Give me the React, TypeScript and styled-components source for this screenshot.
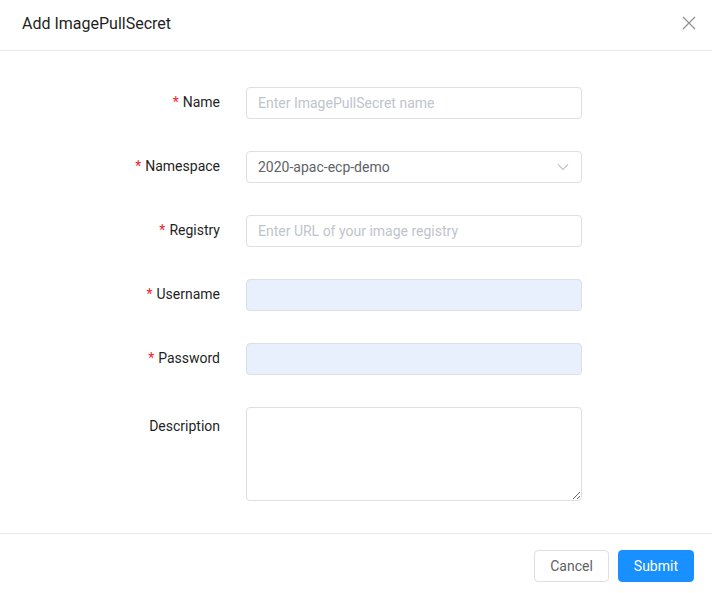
import styled, { createGlobalStyle } from "styled-components"

const Global = createGlobalStyle`
  html, body {
    margin: 0;
    padding: 0;
    background: #fff;
    font-family: Roboto, "Liberation Sans", sans-serif;
  }
  * { box-sizing: border-box; }
`

const Dialog = styled.div`
  width: 712px;
  height: 593px;
  display: flex;
  flex-direction: column;
  background: #fff;
`

const Header = styled.div`
  height: 51px;
  display: flex;
  align-items: center;
  justify-content: space-between;
  padding: 0 15px 4px 22px;
  border-bottom: 1px solid #e8e8e8;
`

const Title = styled.h2`
  margin: 0;
  font-size: 16px;
  font-weight: 400;
  color: #1f1f1f;
`

const CloseButton = styled.button`
  border: 0;
  background: none;
  padding: 0;
  width: 16px;
  height: 16px;
  display: flex;
  cursor: pointer;
`

const Body = styled.form`
  flex: 1;
  padding-top: 36px;
  display: flex;
  flex-direction: column;
  gap: 32px;
`

const Row = styled.div`
  display: grid;
  grid-template-columns: 246px 336px;
  align-items: start;
`

const Label = styled.label<{ $offset?: number }>`
  padding-right: 26px;
  padding-top: ${(p) => p.$offset ?? 0}px;
  text-align: right;
  font-size: 14px;
  font-weight: 400;
  color: #1f1f1f;
  line-height: 30px;
`

const Star = styled.span`
  color: #f5222d;
  margin-right: 4px;
`

const Input = styled.input<{ $filled?: boolean }>`
  width: 336px;
  height: 32px;
  padding: 0 11px;
  border: 1px solid #dcdfe6;
  border-radius: 4px;
  background: ${(p) => (p.$filled ? "#e8f0fe" : "#fff")};
  font-family: inherit;
  font-size: 14px;
  color: #606266;
  outline: none;

  &::placeholder {
    color: #c0c4cc;
  }
`

const SelectBox = styled.div`
  width: 336px;
  height: 32px;
  padding: 0 12px 0 11px;
  border: 1px solid #dcdfe6;
  border-radius: 4px;
  display: flex;
  align-items: center;
  justify-content: space-between;
  font-size: 14px;
  color: #606266;
`

const TextArea = styled.textarea`
  width: 336px;
  height: 94px;
  padding: 6px 11px;
  border: 1px solid #dcdfe6;
  border-radius: 4px;
  font-family: inherit;
  font-size: 14px;
  color: #606266;
  outline: none;
  resize: vertical;
  display: block;
`

const Footer = styled.div`
  height: 60px;
  border-top: 1px solid #e8e8e8;
  display: flex;
  justify-content: flex-end;
  align-items: flex-start;
  gap: 9px;
  padding: 16px 18px 0 0;
`

const Button = styled.button<{ $primary?: boolean }>`
  height: 32px;
  padding: 0 15px;
  border-radius: 4px;
  font-family: inherit;
  font-size: 14px;
  cursor: pointer;
  border: 1px solid ${(p) => (p.$primary ? "#1890ff" : "#dcdfe6")};
  background: ${(p) => (p.$primary ? "#1890ff" : "#fff")};
  color: ${(p) => (p.$primary ? "#fff" : "#606266")};
  font-weight: 400;
`

const Chevron = () => (
  <svg width="12" height="8" viewBox="0 0 12 8" fill="none">
    <path d="M1 1.5l5 5 5-5" stroke="#c0c4cc" strokeWidth="1.1" />
  </svg>
)

export default function App() {
  return (
    <>
      <Global />
      <Dialog>
        <Header>
          <Title>Add ImagePullSecret</Title>
          <CloseButton aria-label="Close">
            <svg width="16" height="16" viewBox="0 0 16 16">
              <path d="M2 2l12 12M14 2L2 14" stroke="#909399" strokeWidth="1.3" />
            </svg>
          </CloseButton>
        </Header>
        <Body>
          <Row>
            <Label><Star>*</Star>Name</Label>
            <Input placeholder="Enter ImagePullSecret name" />
          </Row>
          <Row>
            <Label><Star>*</Star>Namespace</Label>
            <SelectBox>
              <span>2020-apac-ecp-demo</span>
              <Chevron />
            </SelectBox>
          </Row>
          <Row>
            <Label><Star>*</Star>Registry</Label>
            <Input placeholder="Enter URL of your image registry" />
          </Row>
          <Row>
            <Label><Star>*</Star>Username</Label>
            <Input $filled />
          </Row>
          <Row>
            <Label><Star>*</Star>Password</Label>
            <Input $filled type="password" />
          </Row>
          <Row>
            <Label $offset={4}>Description</Label>
            <TextArea />
          </Row>
        </Body>
        <Footer>
          <Button type="button">Cancel</Button>
          <Button type="button" $primary>Submit</Button>
        </Footer>
      </Dialog>
    </>
  )
}
